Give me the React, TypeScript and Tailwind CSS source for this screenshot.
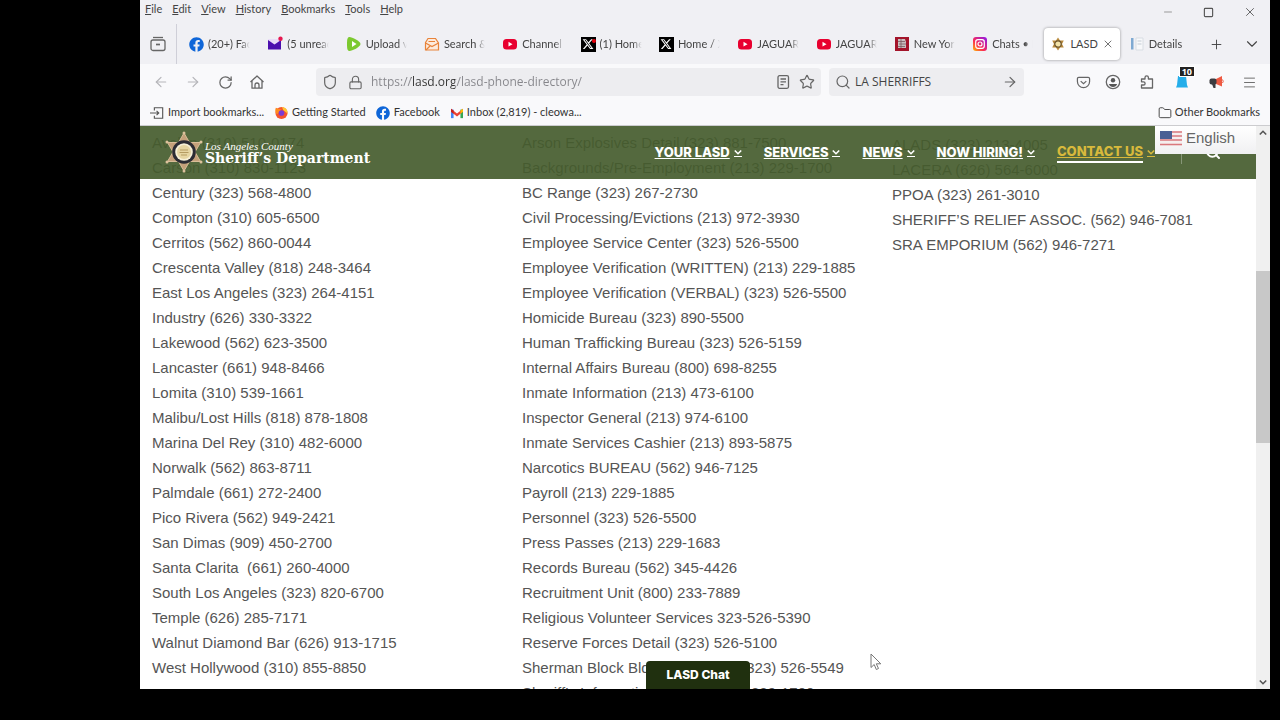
import { useState, type ReactNode } from 'react'
import {
  ArrowLeft,
  ArrowRight,
  ChevronDown,
  Folder,
  Lock,
  Menu,
  Minus,
  Plus,
  RotateCw,
  Search,
  Shield,
  Square,
  Star,
  X,
} from 'lucide-react'
import { FaFacebook } from 'react-icons/fa'
import { FaXTwitter } from 'react-icons/fa6'

const stations = [
  'Avalon (310) 510-0174',
  'Carson (310) 830-1123',
  'Century (323) 568-4800',
  'Compton (310) 605-6500',
  'Cerritos (562) 860-0044',
  'Crescenta Valley (818) 248-3464',
  'East Los Angeles (323) 264-4151',
  'Industry (626) 330-3322',
  'Lakewood (562) 623-3500',
  'Lancaster (661) 948-8466',
  'Lomita (310) 539-1661',
  'Malibu/Lost Hills (818) 878-1808',
  'Marina Del Rey (310) 482-6000',
  'Norwalk (562) 863-8711',
  'Palmdale (661) 272-2400',
  'Pico Rivera (562) 949-2421',
  'San Dimas (909) 450-2700',
  'Santa Clarita  (661) 260-4000',
  'South Los Angeles (323) 820-6700',
  'Temple (626) 285-7171',
  'Walnut Diamond Bar (626) 913-1715',
  'West Hollywood (310) 855-8850',
]

const bureaus = [
  'Arson Explosives Detail (323) 881-7500',
  'Backgrounds/Pre-Employment (213) 229-1700',
  'BC Range (323) 267-2730',
  'Civil Processing/Evictions (213) 972-3930',
  'Employee Service Center (323) 526-5500',
  'Employee Verification (WRITTEN) (213) 229-1885',
  'Employee Verification (VERBAL) (323) 526-5500',
  'Homicide Bureau (323) 890-5500',
  'Human Trafficking Bureau (323) 526-5159',
  'Internal Affairs Bureau (800) 698-8255',
  'Inmate Information (213) 473-6100',
  'Inspector General (213) 974-6100',
  'Inmate Services Cashier (213) 893-5875',
  'Narcotics BUREAU (562) 946-7125',
  'Payroll (213) 229-1885',
  'Personnel (323) 526-5500',
  'Press Passes (213) 229-1683',
  'Records Bureau (562) 345-4426',
  'Recruitment Unit (800) 233-7889',
  'Religious Volunteer Services 323-526-5390',
  'Reserve Forces Detail (323) 526-5100',
  'Sherman Block Bldg Information (323) 526-5549',
  'Sheriff’s Information Bureau (213) 229-1700',
]

const associations = [
  'ALADS (323) 213-4005',
  'LACERA (626) 564-6000',
  'PPOA (323) 261-3010',
  'SHERIFF’S RELIEF ASSOC. (562) 946-7081',
  'SRA EMPORIUM (562) 946-7271',
]

const menus = ['File', 'Edit', 'View', 'History', 'Bookmarks', 'Tools', 'Help']

function StarBadge({ className }: { className: string }) {
  return (
    <svg viewBox="0 0 40 44" className={className} aria-hidden="true">
      <path
        d="M20 3 L25.500 12.500 L36.500 12.500 L31 22 L36.500 31.500 L25.500 31.500 L20 41 L14.500 31.500 L3.500 31.500 L9 22 L3.500 12.500 L14.500 12.500 Z"
        fill="#c4a07a"
        stroke="#d9bd98"
        strokeWidth="1"
      />
      <g fill="#dcc19c">
        <circle cx="20" cy="3" r="1.500" />
        <circle cx="37" cy="12" r="1.500" />
        <circle cx="37" cy="32" r="1.500" />
        <circle cx="20" cy="41" r="1.500" />
        <circle cx="3" cy="32" r="1.500" />
        <circle cx="3" cy="12" r="1.500" />
      </g>
      <circle cx="20" cy="22" r="11.800" fill="#2b2b33" />
      <circle cx="20" cy="22" r="8.800" fill="#f6efd6" />
      <circle cx="20" cy="22" r="7" fill="#e6d5a2" />
      <path d="M16 20 H24 M15.500 22.500 H24.500 M17 25 H23" stroke="#b59c62" strokeWidth="1" />
    </svg>
  )
}

function Caret({ up }: { up?: boolean }) {
  return (
    <svg viewBox="0 0 8 8" className="size-2 shrink-0" fill="none" stroke="currentColor" strokeWidth="1.600" aria-hidden="true">
      <path d={up ? 'M0.800 5.500 L4 2.300 L7.200 5.500' : 'M0.800 2.500 L4 5.700 L7.200 2.500'} />
    </svg>
  )
}

function YouTubeIcon() {
  return (
    <svg viewBox="0 0 16 16" className="size-4 shrink-0" aria-hidden="true">
      <rect x="1" y="3" width="14" height="10.500" rx="3.500" fill="#e8002f" />
      <path d="M6.500 5.800 L10.500 8.200 L6.500 10.600 Z" fill="#fff" />
    </svg>
  )
}

function XIcon({ unread }: { unread?: boolean }) {
  return (
    <span className="relative flex size-[15px] shrink-0 items-center justify-center bg-black text-white">
      <FaXTwitter className="size-3" />
      {unread && <span className="absolute top-0.5 right-0 size-1 rounded-full bg-red-600" />}
    </span>
  )
}

function MailIcon() {
  return (
    <svg viewBox="0 0 16 16" className="size-4 shrink-0" aria-hidden="true">
      <rect x="1" y="3" width="13" height="10.500" fill="#4b0fae" />
      <path d="M1 4 L7.500 8.500 L14 4 L14 3 L1 3 Z" fill="#e9dcf8" />
      <circle cx="13.500" cy="2.800" r="2.200" fill="#e5174f" />
    </svg>
  )
}

function RumbleIcon() {
  return (
    <svg viewBox="0 0 16 16" className="size-4 shrink-0" aria-hidden="true">
      <path
        d="M3.500 1 C1.500 1 1 3 1 8 C1 13 1.500 15 3.500 15 C6 15 14.500 11 14.500 8 C14.500 5 6 1 3.500 1 Z"
        fill="#7cc92f"
      />
      <path d="M6 5 L10.500 8 L6 11 Z" fill="#fff" />
    </svg>
  )
}

function EnvelopeIcon() {
  return (
    <svg viewBox="0 0 16 16" className="size-4 shrink-0" fill="none" stroke="#e8833a" strokeWidth="1.200" aria-hidden="true">
      <path d="M1.500 6.500 L4 2.500 L11.500 2.500 L14.500 7 V14 H1.500 Z" fill="#fdebdc" />
      <path d="M1.500 7 L8 10.500 L14.500 7 M4.500 5.500 H11 M2 14 L6 10" />
    </svg>
  )
}

function NewspaperIcon() {
  return (
    <svg viewBox="0 0 16 16" className="size-4 shrink-0" aria-hidden="true">
      <rect x="1" y="1" width="14" height="14" fill="#a3142a" />
      <path d="M4 3 H11 L12 6 V12 H4 Z" fill="#c9bfc0" />
      <path d="M4 5.500 H11 M5 8 H12 M4 10.500 H11 M7 3 V12" stroke="#7b5a60" strokeWidth="0.800" />
    </svg>
  )
}

function InstagramIcon() {
  return (
    <svg viewBox="0 0 16 16" className="size-4 shrink-0" aria-hidden="true">
      <defs>
        <linearGradient id="ig" x1="0" y1="1" x2="1" y2="0">
          <stop offset="0" stopColor="#ffb900" />
          <stop offset="0.400" stopColor="#fb2a55" />
          <stop offset="1" stopColor="#8a18f0" />
        </linearGradient>
      </defs>
      <rect x="1" y="1" width="14" height="14" rx="3" fill="url(#ig)" />
      <rect x="3.700" y="3.700" width="8.600" height="8.600" rx="2.200" fill="none" stroke="#fff" strokeWidth="1.200" />
      <circle cx="8" cy="8" r="2" fill="none" stroke="#fff" strokeWidth="1.200" />
    </svg>
  )
}

function SheriffIcon() {
  return (
    <svg viewBox="0 0 16 16" className="size-4 shrink-0" aria-hidden="true">
      <path
        d="M8 1.500 L10 4.500 L13.800 4.500 L12 8 L13.800 11.500 L10 11.500 L8 14.500 L6 11.500 L2.200 11.500 L4 8 L2.200 4.500 L6 4.500 Z"
        fill="#b98a3c"
      />
      <circle cx="8" cy="8" r="3.200" fill="#f3e3a8" stroke="#6a532c" strokeWidth="1.200" />
    </svg>
  )
}

function DetailsIcon() {
  return (
    <svg viewBox="0 0 16 16" className="size-4 shrink-0" aria-hidden="true">
      <rect x="2" y="2" width="2.500" height="11.500" fill="#7ea9d2" />
      <path d="M7 2 H14 V14 H7 Z" fill="#f7f8fa" stroke="#d8dde3" />
      <path d="M8.500 5 H12.500 M8.500 8 H12.500" stroke="#c3cbd4" />
    </svg>
  )
}

function FirefoxIcon() {
  return (
    <svg viewBox="0 0 16 16" className="size-[15px] shrink-0" aria-hidden="true">
      <circle cx="8" cy="8.500" r="6.500" fill="#f5542f" />
      <path d="M8 2 C13 2 15 6 14.300 9.500 C13 7 11 7 10 5.500 C9 4 9.500 3 8 2Z" fill="#ffc632" />
      <path d="M2 3 C4 4 5 4 8 5 L3 10 C1 8 1 5 2 3Z" fill="#ff8a1f" />
      <circle cx="8" cy="8.500" r="3" fill="#7a3bd6" />
    </svg>
  )
}

function GmailIcon() {
  return (
    <svg viewBox="0 0 16 14" className="h-3 w-3.5 shrink-0" aria-hidden="true">
      <path d="M1 3 H4 V13 H1 Z" fill="#4285f4" />
      <path d="M12 3 H15 V13 H12 Z" fill="#34a853" />
      <path d="M1 2 L8 7.500 L15 2 V5.500 L8 11 L1 5.500 Z" fill="#ea4335" />
      <path d="M12 4 L15 2 V5.500 L12 8 Z" fill="#fbbc04" />
      <path d="M1 2 L4 4 V8 L1 5.500 Z" fill="#c5221f" />
    </svg>
  )
}

type TabItem = { title: string; icon: ReactNode }

const tabs: TabItem[] = [
  { title: '(20+) Facebook', icon: <FaFacebook className="size-[15px] shrink-0 text-[#0f66d8]" /> },
  { title: '(5 unread)', icon: <MailIcon /> },
  { title: 'Upload video', icon: <RumbleIcon /> },
  { title: 'Search & find', icon: <EnvelopeIcon /> },
  { title: 'Channel', icon: <YouTubeIcon /> },
  { title: '(1) Home', icon: <XIcon unread /> },
  { title: 'Home / X', icon: <XIcon /> },
  { title: 'JAGUAR', icon: <YouTubeIcon /> },
  { title: 'JAGUAR', icon: <YouTubeIcon /> },
  { title: 'New York', icon: <NewspaperIcon /> },
  { title: 'Chats • Inbox', icon: <InstagramIcon /> },
  { title: 'LASD', icon: <SheriffIcon /> },
  { title: 'Details', icon: <DetailsIcon /> },
]

function TitleBar() {
  return (
    <div className="flex h-6 shrink-0 items-start justify-between pl-[5px]">
      <nav className="flex gap-2.5 text-[11px] leading-[18px] text-[#444]" aria-label="Menu bar">
        {menus.map((menu) => (
          <button key={menu} type="button">
            <span className="underline">{menu[0]}</span>
            {menu.slice(1)}
          </button>
        ))}
      </nav>
      <div className="flex text-[#555]">
        <button type="button" aria-label="Minimize" className="flex h-6 w-[41px] items-center justify-center text-[#999]">
          <Minus className="size-3" strokeWidth={2} />
        </button>
        <button type="button" aria-label="Maximize" className="flex h-6 w-[41px] items-center justify-center">
          <Square className="size-[11px]" strokeWidth={2.5} />
        </button>
        <button type="button" aria-label="Close window" className="flex h-6 w-[41px] items-center justify-center">
          <X className="size-3.5" strokeWidth={1.5} />
        </button>
      </div>
    </div>
  )
}

function TabStrip() {
  const [active, setActive] = useState(11)

  return (
    <div className="flex h-10 shrink-0 items-center text-[#444]">
      <button type="button" aria-label="Recent browsing" className="flex w-9 shrink-0 items-center justify-center">
        <svg viewBox="0 0 16 16" className="size-4" fill="none" stroke="#666" strokeWidth="1.300" aria-hidden="true">
          <path d="M3 1.500 H13" />
          <rect x="1" y="4" width="14" height="10.500" rx="2" />
          <path d="M6 8.500 H10" strokeWidth="1.700" />
        </svg>
      </button>
      <div className="h-full w-px bg-[#cfcfd8]" />
      <div className="flex min-w-0 flex-1 gap-[3px] pl-1.5" role="tablist">
        {tabs.map((tab, i) => (
          <div
            key={i}
            className={
              i === active
                ? 'flex h-8 min-w-0 flex-1 items-center rounded bg-white px-1.5 shadow-[0_0_3px_rgba(0,0,0,0.4)]'
                : 'flex h-8 min-w-0 flex-1 items-center px-1.5'
            }
          >
            <button
              type="button"
              role="tab"
              aria-selected={i === active}
              onClick={() => setActive(i)}
              className="flex min-w-0 flex-1 items-center gap-1"
            >
              {tab.icon}
              <span
                className={
                  i === active
                    ? 'flex-1 overflow-hidden text-left text-[11px] whitespace-nowrap'
                    : 'flex-1 overflow-hidden mask-r-from-75% mask-r-to-95% text-left text-[11px] whitespace-nowrap'
                }
              >
                {tab.title}
              </span>
            </button>
            {i === active && (
              <button type="button" aria-label="Close tab">
                <X className="size-3" strokeWidth={1.5} />
              </button>
            )}
          </div>
        ))}
      </div>
      <button type="button" aria-label="New tab" className="flex w-9 shrink-0 items-center justify-center">
        <Plus className="size-[15px]" strokeWidth={1.5} />
      </button>
      <button type="button" aria-label="List all tabs" className="flex w-9 shrink-0 items-center justify-center">
        <ChevronDown className="size-[18px]" strokeWidth={1.5} />
      </button>
    </div>
  )
}

function Toolbar() {
  const [url, setUrl] = useState('https://lasd.org/lasd-phone-directory/')
  const [query, setQuery] = useState('LA SHERRIFFS')

  return (
    <div className="flex h-9 shrink-0 items-center bg-[#f9f9fb] pr-[5px] pl-[5px] font-['Open_Sans',sans-serif] text-[#666]">
      <button type="button" aria-label="Back" className="flex w-8 shrink-0 justify-center text-[#b5b5b9]">
        <ArrowLeft className="size-4" strokeWidth={1.8} />
      </button>
      <button type="button" aria-label="Forward" className="flex w-8 shrink-0 justify-center text-[#b5b5b9]">
        <ArrowRight className="size-4" strokeWidth={1.8} />
      </button>
      <button type="button" aria-label="Reload" className="flex w-8 shrink-0 justify-center">
        <RotateCw className="size-[15px]" strokeWidth={2} />
      </button>
      <button type="button" aria-label="Home" className="flex w-8 shrink-0 justify-center">
        <svg viewBox="0 0 16 16" className="size-4" fill="none" stroke="#666" strokeWidth="1.300" strokeLinejoin="round" aria-hidden="true">
          <path d="M1.500 8 L8 2 L14.500 8 M3 7 V14.200 H13 V7" />
          <path d="M6 14 V11 A2 2 0 0 1 10 11 V14" />
        </svg>
      </button>

      <div className="ml-[43px] flex h-7 min-w-0 flex-[493] items-center rounded-sm bg-[#ededf0] px-1.5">
        <Shield className="size-4 shrink-0" strokeWidth={1.8} />
        <Lock className="ml-2.5 size-[15px] shrink-0" strokeWidth={1.8} />
        <label htmlFor="url" className="sr-only">
          Address
        </label>
        <input
          id="url"
          value={url}
          onChange={(e) => setUrl(e.target.value)}
          className="ml-2 min-w-0 flex-1 bg-[linear-gradient(90deg,#85858a_40px,#333_40px,#333_84px,#85858a_84px)] bg-clip-text text-[12px] text-transparent outline-none"
        />
        <button type="button" aria-label="Reader view">
          <svg viewBox="0 0 16 16" className="size-4" fill="none" stroke="#666" strokeWidth="1.300" aria-hidden="true">
            <rect x="3" y="1.700" width="10.500" height="12.600" rx="1.500" />
            <path d="M5.500 5 H11 M5.500 7.800 H11 M5.500 10.600 H8.500" />
          </svg>
        </button>
        <button type="button" aria-label="Bookmark this page" className="ml-2">
          <Star className="size-4" strokeWidth={1.8} />
        </button>
      </div>

      <div className="ml-2 flex h-7 min-w-0 flex-[183] items-center rounded-sm bg-[#ededf0] px-1.5">
        <Search className="size-4 shrink-0" strokeWidth={1.8} />
        <label htmlFor="search" className="sr-only">
          Search
        </label>
        <input
          id="search"
          value={query}
          onChange={(e) => setQuery(e.target.value)}
          className="ml-1 min-w-0 flex-1 bg-transparent text-[12px] text-[#444] outline-none"
        />
        <button type="button" aria-label="Go">
          <ArrowRight className="size-4" strokeWidth={1.8} />
        </button>
      </div>

      <div className="ml-[45px] flex shrink-0 items-center">
        <button type="button" aria-label="Save to Pocket" className="flex w-7 justify-center">
          <svg viewBox="0 0 16 16" className="size-[15px]" fill="none" stroke="#666" strokeWidth="1.300" aria-hidden="true">
            <path d="M3 2.500 H13 Q14.500 2.500 14.500 4 V7 A6.500 6.500 0 0 1 1.500 7 V4 Q1.500 2.500 3 2.500 Z" />
            <path d="M5 6.500 L8 9.300 L11 6.500" />
          </svg>
        </button>
        <button type="button" aria-label="Account" className="flex w-8 justify-center">
          <svg viewBox="0 0 16 16" className="size-4" fill="none" aria-hidden="true">
            <circle cx="8" cy="8" r="6.700" stroke="#666" strokeWidth="1.300" />
            <circle cx="8" cy="6.200" r="2.200" fill="#555" />
            <path d="M3.800 10 H12.200 Q11 13 8 13 Q5 13 3.800 10 Z" fill="#555" />
          </svg>
        </button>
        <button type="button" aria-label="Extensions" className="flex w-9 justify-center">
          <svg viewBox="0 0 16 16" className="size-4" fill="none" stroke="#666" strokeWidth="1.300" strokeLinejoin="round" aria-hidden="true">
            <path d="M2.500 6.500 V5 H6 V3.500 A1.700 1.700 0 0 1 9.400 3.500 V5 H13.500 V14 H2.500 V11 H4.500 A1.600 1.600 0 0 0 4.500 7.800 H2.500 Z" />
          </svg>
        </button>
        <button type="button" aria-label="Notifications" className="relative flex w-[34px] justify-center">
          <svg viewBox="0 0 16 16" className="size-4" aria-hidden="true">
            <path d="M4 2 H12 L13 11 L14 13.500 H2 L3 11 Z" fill="#25aeea" />
          </svg>
          <span className="absolute -top-2 right-1 border border-white bg-[#222] px-0.5 text-[9px] leading-[9px] font-bold text-white">
            10
          </span>
        </button>
        <button type="button" aria-label="Announcements" className="flex w-[34px] justify-center">
          <svg viewBox="0 0 16 16" className="size-4" aria-hidden="true">
            <path d="M8 5 L14 2 V12.500 L8 10 Z" fill="#ee5a42" />
            <rect x="1.500" y="4.500" width="7" height="6" rx="2" fill="#3c3c40" />
            <path d="M4 10 H7.500 V14 H5.500 Z" fill="#3c3c40" />
            <path d="M14.500 5.500 Q16 7.500 14.500 9" stroke="#ee5a42" fill="none" />
          </svg>
        </button>
        <button type="button" aria-label="Application menu" className="flex w-8 justify-center">
          <Menu className="size-[15px]" strokeWidth={1.5} />
        </button>
      </div>
    </div>
  )
}

function BookmarksBar() {
  return (
    <div className="flex h-[26px] shrink-0 items-center gap-2.5 border-b border-[#cccccf] bg-[#f9f9fb] px-2.5 text-[11px] whitespace-nowrap text-[#333]">
      <a href="#import" className="flex items-center gap-1">
        <svg viewBox="0 0 16 16" className="size-3.5" fill="none" stroke="#555" strokeWidth="1.300" aria-hidden="true">
          <path d="M5 5 V2 H14.500 V14 H5 V11 M0 8 H10 M7.500 5.500 L10 8 L7.500 10.500" />
        </svg>
        Import bookmarks...
      </a>
      <a href="#getting-started" className="flex items-center gap-[3px]">
        <FirefoxIcon />
        Getting Started
      </a>
      <a href="#facebook" className="flex items-center gap-1">
        <FaFacebook className="size-3.5 text-[#0f66d8]" />
        Facebook
      </a>
      <a href="#inbox" className="flex items-center gap-[3px]">
        <GmailIcon />
        Inbox (2,819) - cleowa...
      </a>
      <button type="button" className="ml-auto flex items-center gap-[3px]">
        <Folder className="size-3.5" strokeWidth={1.5} />
        Other Bookmarks
      </button>
    </div>
  )
}

const navItems = ['YOUR LASD', 'SERVICES', 'NEWS', 'NOW HIRING!', 'CONTACT US']

function SiteHeader() {
  return (
    <header className="absolute inset-x-0 top-0 flex h-[53px] items-center justify-between bg-[#455c2e]/92 pr-[35px] pb-px pl-6">
      <a href="#home" className="flex items-center gap-px text-white">
        <StarBadge className="h-11 w-10" />
        <span className="flex flex-col">
          <span className="font-['Liberation_Serif',serif] text-[11px] leading-3 italic">Los Angeles County</span>
          <span className="font-['DejaVu_Serif',serif] text-[14px] leading-3 font-bold">Sheriff’s Department</span>
        </span>
      </a>
      <nav className="flex items-center gap-[22px] font-['Inter',sans-serif] text-[13px] leading-4 font-extrabold text-white">
        {navItems.map((item) => (
          <a
            key={item}
            href="#nav"
            className={item === 'CONTACT US' ? 'flex items-center gap-1 text-[#d8b93c]' : 'flex items-center gap-1'}
          >
            <span
              className={item === 'CONTACT US' ? 'border-b-2 border-white pt-0.5 pb-0.5 underline' : 'underline'}
            >
              {item}
            </span>
            <span className="border-b border-current">
              <Caret />
            </span>
          </a>
        ))}
        <div className="flex items-center gap-[23px] pl-1">
          <span className="h-6 w-px bg-white/30" />
          <button type="button" aria-label="Search site">
            <Search className="size-4" strokeWidth={3} />
          </button>
        </div>
      </nav>
    </header>
  )
}

function LanguagePicker() {
  return (
    <button
      type="button"
      className="absolute top-0 right-0 flex h-7 w-[101px] items-center gap-1 bg-linear-to-b from-white to-[#f0f0f2] pb-1 pl-[5px] text-[15px] text-[#666]"
    >
      <svg viewBox="0 0 22 15" className="h-[15px] w-[22px]" aria-hidden="true">
        <rect width="22" height="15" fill="#f5eeee" />
        <path d="M0 1 H22 M0 5 H22 M0 9 H22 M0 13.500 H22" stroke="#d9787e" strokeWidth="1.500" />
        <rect width="12" height="8" fill="#4a5f94" />
      </svg>
      English
    </button>
  )
}

function PhoneList({ items, className }: { items: string[]; className?: string }) {
  return (
    <ul className={className}>
      {items.map((item) => (
        <li key={item} className="whitespace-pre">
          {item}
        </li>
      ))}
    </ul>
  )
}

function Scrollbar() {
  return (
    <div className="flex w-3.5 shrink-0 flex-col items-center bg-[#f0f0f0] py-[3px] text-[#555]">
      <Caret up />
      <div className="flex-[134]" />
      <div className="w-full flex-[172] bg-[#c8c8c8]" />
      <div className="flex-[235]" />
      <Caret />
    </div>
  )
}

export default function App() {
  return (
    <div className="h-screen bg-black pr-2.5 pb-[31px] pl-[140px] font-['Lato',sans-serif]">
      <div className="flex h-full flex-col overflow-hidden bg-[#f0f0f4]">
        <TitleBar />
        <TabStrip />
        <Toolbar />
        <BookmarksBar />

        <div className="flex min-h-0 flex-1">
          <main className="relative min-w-0 flex-1 overflow-hidden bg-white font-['Liberation_Sans',sans-serif]">
            <div className="grid grid-cols-3 gap-3 pt-1 pr-1.5 pl-3 text-[15px] leading-[25px] text-[#555]">
              <PhoneList items={stations} />
              <PhoneList items={bureaus} />
              <PhoneList items={associations} className="pt-0.5" />
            </div>
            <SiteHeader />
            <LanguagePicker />
            <button
              type="button"
              className="absolute bottom-0 left-1/2 h-7 w-[104px] -translate-x-1/2 rounded-t-sm bg-[#20300f] font-['Inter',sans-serif] text-[12px] font-extrabold text-white"
            >
              LASD Chat
            </button>
            <svg viewBox="0 0 12 18" className="absolute right-[374px] bottom-[18px] h-[18px] w-3" aria-hidden="true">
              <path
                d="M1 1 V14.500 L4.200 11.500 L6.300 16.500 L8.500 15.500 L6.300 10.800 H10.800 Z"
                fill="#fff"
                stroke="#777"
                strokeWidth="1"
              />
            </svg>
          </main>
          <Scrollbar />
        </div>
      </div>
    </div>
  )
}
